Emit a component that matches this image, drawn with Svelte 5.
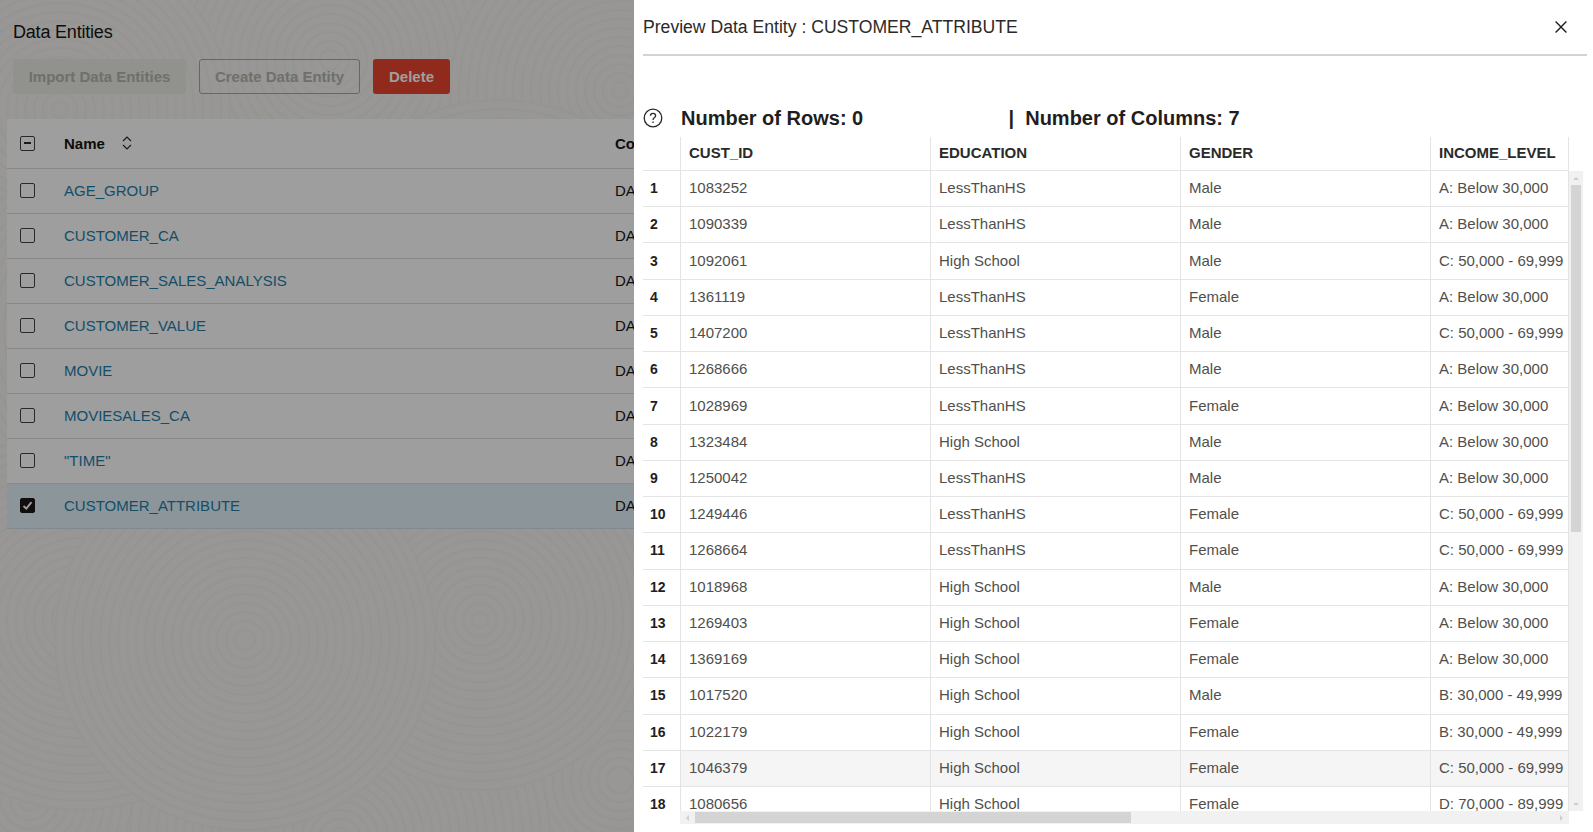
<script>
  const entities = ['AGE_GROUP','CUSTOMER_CA','CUSTOMER_SALES_ANALYSIS','CUSTOMER_VALUE','MOVIE','MOVIESALES_CA','"TIME"','CUSTOMER_ATTRIBUTE'];
  const A='A: Below 30,000', B='B: 30,000 - 49,999', C='C: 50,000 - 69,999', D='D: 70,000 - 89,999';
  const L='LessThanHS', H='High School', M='Male', F='Female';
  const rows = [
    ['1083252',L,M,A],['1090339',L,M,A],['1092061',H,M,C],['1361119',L,F,A],['1407200',L,M,C],['1268666',L,M,A],
    ['1028969',L,F,A],['1323484',H,M,A],['1250042',L,M,A],['1249446',L,F,C],['1268664',L,F,C],['1018968',H,M,A],
    ['1269403',H,F,A],['1369169',H,F,A],['1017520',H,M,B],['1022179',H,F,B],['1046379',H,F,C],['1080656',H,F,D]
  ];
  // overlapping swirl patches, painted back to front: [cx, cy, outer radius]
  const patches = [
    [330,60,190],[620,90,170],[60,110,170],[500,300,200],[140,330,190],
    [620,780,220],[30,800,200],[340,840,210],[620,560,170],[480,620,170],[80,620,190],[245,640,190]
  ];
  const rings = (max) => {
    const out = [];
    for (let r = max; r > 6; r -= 9) out.push(r);
    return out;
  };
</script>

<div class="screen">
  <section class="page">
    <svg class="texture" width="634" height="832" aria-hidden="true">
      {#each patches as p}
        {#each rings(p[2]) as r}
          <circle cx={p[0]} cy={p[1]} {r} />
        {/each}
      {/each}
    </svg>
    <h1>Data Entities</h1>
    <div class="actions">
      <button class="btn import">Import Data Entities</button>
      <button class="btn create">Create Data Entity</button>
      <button class="btn delete">Delete</button>
    </div>
    <div class="list">
      <div class="list-row head">
        <span class="check minus"><i></i></span>
        <span class="name-head">Name</span>
        <svg class="sort" width="10" height="14" viewBox="0 0 10 14" fill="none" stroke="#2b2a29" stroke-width="1.2"><path d="M1 5 5 1l4 4M1 9l4 4 4-4"/></svg>
        <span class="co"><b>Co</b></span>
      </div>
      {#each entities as e, i}
        <div class="list-row" class:sel={i === 7}>
          <span class="check" class:on={i === 7}>
            {#if i === 7}
              <svg width="11" height="11" viewBox="0 0 11 11" fill="none" stroke="#fff" stroke-width="1.9"><path d="M1.5 6 4.3 8.6 9.5 2.2"/></svg>
            {/if}
          </span>
          <span class="link">{e}</span>
          <span class="co">DA</span>
        </div>
      {/each}
    </div>
    <div class="scrim"></div>
  </section>

  <aside class="drawer">
    <header>
      <h2>Preview Data Entity : CUSTOMER_ATTRIBUTE</h2>
      <svg class="close" width="12" height="12" viewBox="0 0 12 12" stroke="#1f1e1d" stroke-width="1.4"><path d="M.6.6l10.8 10.8M11.4.6.6 11.4"/></svg>
    </header>
    <div class="info">
      <svg class="help" width="20" height="20" viewBox="0 0 20 20" fill="none" stroke="#2b2a29" stroke-width="1.3">
        <circle cx="10" cy="10" r="8.8"/>
        <path d="M7.4 7.8c0-1.5 1.2-2.4 2.6-2.4s2.6.9 2.6 2.3c0 2.1-2.6 2-2.6 4.2"/>
        <path d="M10 13.4v1.6"/>
      </svg>
      <span class="rows-count">Number of Rows: 0</span>
      <span class="cols-count">|&nbsp; Number of Columns: 7</span>
    </div>
    <div class="grid">
      <div class="tr th">
        <div class="rh"></div>
        <div class="td c1">CUST_ID</div>
        <div class="td c2">EDUCATION</div>
        <div class="td c3">GENDER</div>
        <div class="td c4">INCOME_LEVEL</div>
      </div>
      <div class="body">
        <div class="clip">
          {#each rows as r, i}
            <div class="tr" class:hover={i === 16}>
              <div class="rh">{i + 1}</div>
              <div class="td c1">{r[0]}</div>
              <div class="td c2">{r[1]}</div>
              <div class="td c3">{r[2]}</div>
              <div class="td c4">{r[3]}</div>
            </div>
          {/each}
        </div>
        <div class="vbar">
          <span class="arr up"></span>
          <span class="vthumb"></span>
          <span class="arr down"></span>
        </div>
      </div>
      <div class="hbar">
        <span class="arr left"></span>
        <span class="hthumb"></span>
        <span class="arr right"></span>
      </div>
    </div>
  </aside>
</div>

<style>
  :global(body) { margin: 0; overflow: hidden; }
  .screen {
    display: flex;
    width: 1593px;
    height: 832px;
    overflow: hidden;
    font-family: "Liberation Sans", Arial, sans-serif;
  }

  /* page behind the drawer */
  .page {
    position: relative;
    flex: 0 0 634px;
    height: 832px;
    padding-top: 22px;
    box-sizing: border-box;
    background: #f5f4f1;
    overflow: hidden;
    color: #161513;
  }
  .texture { position: absolute; left: 0; top: 0; }
  .texture circle { fill: #f5f4f1; stroke: #f0efec; stroke-width: 2; }
  .scrim { position: absolute; inset: 0; background: rgba(0, 0, 0, .38); }
  h1 {
    position: relative;
    margin: 0 0 17px 13px;
    font-size: 18px;
    font-weight: 400;
    line-height: 20px;
    letter-spacing: -.2px;
  }
  .actions { position: relative; display: flex; gap: 13px; margin-left: 13px; }
  .btn {
    height: 35px;
    border-radius: 3px;
    font: 700 15px "Liberation Sans", Arial, sans-serif;
    padding: 0;
    box-sizing: border-box;
  }
  .import { width: 173px; background: #ebeae6; border: 0; color: #b4b3af; }
  .create { width: 161px; background: transparent; border: 1px solid #a6a5a2; color: #b4b3af; }
  .delete { width: 77px; background: #e7442f; border: 0; color: #fff; }
  .list {
    position: relative;
    margin: 25px 0 0 7px;
    background: #fff;
  }
  .list-row {
    display: flex;
    align-items: center;
    height: 45px;
    box-sizing: border-box;
    border-bottom: 1px solid #dfdedb;
    font-size: 15px;
    padding: 0 0 2px 13px;
  }
  .list-row.head { height: 50px; padding-bottom: 1px; }
  .list-row.sel { background: #e3f2f9; border-bottom-color: #cfdde4; }
  .check {
    flex: 0 0 15px;
    height: 15px;
    box-sizing: border-box;
    border: 1.5px solid #44433f;
    border-radius: 2px;
    display: flex;
    align-items: center;
    justify-content: center;
    margin-right: 29px;
  }
  .check.on { background: #1a1918; border-color: #1a1918; }
  .minus i { width: 7px; height: 2px; background: #2b2a29; display: block; }
  .name-head { font-weight: 700; }
  .sort { margin-left: 17px; }
  .link { color: #1e7ea8; }
  .co { position: absolute; left: 608px; white-space: nowrap; }

  /* drawer */
  .drawer {
    flex: 1;
    min-width: 0;
    height: 832px;
    box-sizing: border-box;
    padding: 0 6px 0 9px;
    background: #fff;
    color: #161513;
  }
  header {
    display: flex;
    align-items: center;
    justify-content: space-between;
    height: 56px;
    box-sizing: border-box;
    border-bottom: 2px solid #d3d3d3;
  }
  h2 { margin: 0; font-size: 17.6px; font-weight: 400; color: #2b2a29; }
  .close { margin-right: 20px; }
  .info {
    display: flex;
    align-items: center;
    height: 26px;
    margin-top: 49px;
    margin-bottom: 6px;
    font-size: 20px;
    font-weight: 700;
    color: #1f1e1d;
  }
  .help { margin-right: 18px; }
  .rows-count { width: 327.5px; }

  .grid { width: 940px; font-size: 15px; }
  .tr { display: flex; height: 36.24px; box-sizing: border-box; border-bottom: 1px solid #e4e4e4; width: 926px; }
  .tr.th { height: 34px; font-weight: 700; color: #2b2a29; }
  .rh {
    flex: 0 0 38px;
    box-sizing: border-box;
    padding: 0 0 1px 7px;
    font-weight: 700;
    font-size: 14px;
    color: #1f1e1d;
    border-right: 1px solid #e4e4e4;
    display: flex;
    align-items: center;
  }
  .td {
    box-sizing: border-box;
    padding: 0 0 2px 8px;
    display: flex;
    align-items: center;
    border-right: 1px solid #e4e4e4;
    white-space: nowrap;
    overflow: hidden;
    color: #504f4d;
  }
  .th .td { color: #2b2a29; }
  .c1, .c2, .c3 { flex: 0 0 250px; }
  .c4 { flex: 0 0 138px; }
  .tr.hover .td { background: #f5f5f5; }

  .body { display: flex; height: 640px; }
  .clip { height: 640px; overflow: hidden; flex: 0 0 926px; }
  .vbar {
    flex: 0 0 14px;
    display: flex;
    flex-direction: column;
    align-items: center;
    background: #f1f1f1;
    box-sizing: border-box;
    padding: 6px 0 5px;
  }
  .vthumb { width: 10px; height: 347px; background: #d4d4d4; margin-top: 5px; }
  .hbar {
    display: flex;
    align-items: center;
    width: 889px;
    height: 13px;
    margin-left: 37px;
    background: #f1f1f1;
    box-sizing: border-box;
    padding: 0 6px;
  }
  .hthumb { width: 436px; height: 11px; margin-left: 6px; background: #d4d4d4; }
  .arr { width: 0; height: 0; border: 3px solid transparent; display: block; }
  .arr.up { border-bottom: 3px solid #cfcfcf; border-top: 0; }
  .arr.down { border-top: 3px solid #cfcfcf; border-bottom: 0; margin-top: auto; }
  .arr.left { border-right: 3px solid #cfcfcf; border-left: 0; }
  .arr.right { border-left: 3px solid #cfcfcf; border-right: 0; margin-left: auto; }
</style>
